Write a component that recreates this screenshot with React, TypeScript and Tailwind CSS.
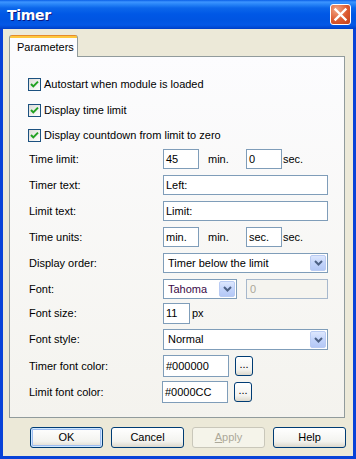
import React from "react";

function Check() {
  return (
    <div className="w-[13px] h-[13px] shrink-0 border border-[#1c5180] bg-[linear-gradient(135deg,#dcdcd7,#ffffff)] flex items-center justify-center">
      <svg width="11" height="11" viewBox="0 0 11 11">
        <path d="M2 5 L4.3 7.4 L9 2.6" stroke="#21a121" strokeWidth="2" fill="none" />
      </svg>
    </div>
  );
}

function ComboArrow({ h }: { h: string }) {
  return (
    <div
      className={
        "w-[16px] " +
        h +
        " shrink-0 rounded-[2px] border border-[#b9cbf3] bg-[linear-gradient(to_bottom,#dde7fd,#c3d4fb_50%,#b4c8f6)] flex items-center justify-center"
      }
    >
      <svg width="9" height="6" viewBox="0 0 9 6">
        <path d="M1 1 L4.5 4.5 L8 1" stroke="#4d6185" strokeWidth="2" fill="none" />
      </svg>
    </div>
  );
}

function XpButton({
  children,
  variant,
}: {
  children: React.ReactNode;
  variant?: "default" | "disabled";
}) {
  if (variant === "disabled") {
    return (
      <div className="w-[73px] h-[21px] rounded-[3px] border border-[#c9c7ba] bg-[#f5f4ea] text-[#aca899] flex items-center justify-center">
        {children}
      </div>
    );
  }
  return (
    <div
      className={
        "w-[73px] h-[21px] rounded-[3px] border border-[#003c74] bg-[linear-gradient(to_bottom,#ffffff,#f3f3ef_70%,#dcd8cc)] flex items-center justify-center " +
        (variant === "default"
          ? "shadow-[inset_0_0_0_1px_#cee7ff,inset_0_0_0_2px_#9ebdf0]"
          : "")
      }
    >
      {children}
    </div>
  );
}

export default function App() {
  return (
    <div className="w-[356px] h-[459px] flex flex-col bg-[#0842d8] font-['Liberation_Sans',Arial,sans-serif] text-[11px] leading-none text-black overflow-hidden select-none">
      {/* Title bar */}
      <div className="h-[29px] shrink-0 flex items-center pl-[7px] pr-[5px] bg-[linear-gradient(to_bottom,#0a5fe6_0px,#3d95ff_2px,#2a87f8_4px,#0b66ea_8px,#0058e6_14px,#0055e2_20px,#0458e6_25px,#0046d0_28px,#003dc4_29px)]">
        <span className="text-white font-bold text-[14px] font-['DejaVu_Sans',sans-serif] tracking-[-0.3px] [text-shadow:1px_1px_0_#0a1883]">
          Timer
        </span>
        <div className="ml-auto w-[21px] h-[21px] rounded-[3px] border border-white bg-[radial-gradient(circle_at_30%_25%,#f2a585,#dc5a30_55%,#c2401a)] flex items-center justify-center">
          <svg width="19" height="19" viewBox="0 0 19 19">
            <path d="M4.5 4.5 L14.5 14.5 M14.5 4.5 L4.5 14.5" stroke="#ffffff" strokeWidth="2.4" strokeLinecap="square" />
          </svg>
        </div>
      </div>

      {/* Client */}
      <div className="flex-1 mx-[3px] mb-[3px] bg-[#ece9d8] flex flex-col pl-[6px] pt-[6px]">
        {/* Tab */}
        <div className="flex">
          <div className="relative z-10 w-[69px] h-[22px] rounded-t-[3px] border-x border-[#919b9c] bg-[linear-gradient(to_bottom,#e68b2c_0px,#e68b2c_1px,#ffc73c_1px,#ffc73c_3px,#fcfcfe_3px)] flex items-center pl-[7px] pt-[3px]">
            Parameters
          </div>
        </div>
        {/* Panel */}
        <div className="-mt-[1px] w-[336px] h-[362px] border border-[#919b9c] bg-[linear-gradient(to_bottom,#fcfcfe,#f4f3ee)] pl-[18px] pt-[21px] flex flex-col">
          <div className="flex items-center h-[13px]">
            <Check />
            <span className="ml-[3px]">Autostart when module is loaded</span>
          </div>
          <div className="flex items-center h-[13px] mt-[13px]">
            <Check />
            <span className="ml-[3px]">Display time limit</span>
          </div>
          <div className="flex items-center h-[13px] mt-[12px]">
            <Check />
            <span className="ml-[3px]">Display countdown from limit to zero</span>
          </div>

          {/* Time limit */}
          <div className="flex items-center h-[20px] mt-[7px]">
            <div className="w-[135px] pl-[1px]">Time limit:</div>
            <div className="w-[36px] h-[20px] border border-[#7f9db9] bg-white flex items-center pl-[2px]">45</div>
            <div className="w-[47px] pl-[9px]">min.</div>
            <div className="w-[36px] h-[20px] border border-[#7f9db9] bg-white flex items-center pl-[2px]">0</div>
            <div className="pl-[1px]">sec.</div>
          </div>

          {/* Timer text */}
          <div className="flex items-center h-[20px] mt-[6px]">
            <div className="w-[135px] pl-[1px]">Timer text:</div>
            <div className="w-[165px] h-[20px] border border-[#7f9db9] bg-white flex items-center pl-[2px]">Left:</div>
          </div>

          {/* Limit text */}
          <div className="flex items-center h-[20px] mt-[6px]">
            <div className="w-[135px] pl-[1px]">Limit text:</div>
            <div className="w-[165px] h-[20px] border border-[#7f9db9] bg-white flex items-center pl-[2px]">Limit:</div>
          </div>

          {/* Time units */}
          <div className="flex items-center h-[20px] mt-[6px]">
            <div className="w-[135px] pl-[1px]">Time units:</div>
            <div className="w-[36px] h-[20px] border border-[#7f9db9] bg-white flex items-center pl-[2px]">min.</div>
            <div className="w-[47px] pl-[9px]">min.</div>
            <div className="w-[36px] h-[20px] border border-[#7f9db9] bg-white flex items-center pl-[2px]">sec.</div>
            <div className="pl-[1px]">sec.</div>
          </div>

          {/* Display order */}
          <div className="flex items-center h-[20px] mt-[6px]">
            <div className="w-[135px] pl-[1px]">Display order:</div>
            <div className="w-[165px] h-[20px] border border-[#7f9db9] bg-white flex items-center pl-[4px] pr-[1px]">
              <span className="flex-1">Timer below the limit</span>
              <ComboArrow h="h-[16px]" />
            </div>
          </div>

          {/* Font */}
          <div className="flex items-center h-[20px] mt-[6px]">
            <div className="w-[135px] pl-[1px]">Font:</div>
            <div className="w-[74px] h-[20px] border border-[#7f9db9] bg-white flex items-center pl-[4px] pr-[1px]">
              <span className="flex-1 text-[#3a0a48]">Tahoma</span>
              <ComboArrow h="h-[16px]" />
            </div>
            <div className="ml-[9px] w-[82px] h-[20px] border border-[#a7b8cc] bg-[#f5f4ef] text-[#aca899] flex items-center pl-[3px]">0</div>
          </div>

          {/* Font size */}
          <div className="flex items-center h-[21px] mt-[4px]">
            <div className="w-[135px] pl-[1px]">Font size:</div>
            <div className="w-[27px] h-[21px] border border-[#7f9db9] bg-white flex items-center pl-[2px]">11</div>
            <div className="pl-[2px]">px</div>
          </div>

          {/* Font style */}
          <div className="flex items-center h-[21px] mt-[5px]">
            <div className="w-[135px] pl-[1px]">Font style:</div>
            <div className="w-[165px] h-[21px] border border-[#7f9db9] bg-white flex items-center pl-[4px] pr-[1px]">
              <span className="flex-1">Normal</span>
              <ComboArrow h="h-[17px]" />
            </div>
          </div>

          {/* Timer font color */}
          <div className="flex items-center h-[22px] mt-[5px]">
            <div className="w-[135px] pl-[1px]">Timer font color:</div>
            <div className="w-[66px] h-[22px] border border-[#7f9db9] bg-white flex items-center pl-[2px]">#000000</div>
            <div className="ml-[6px] w-[18px] h-[20px] rounded-[3px] border border-[#003c74] bg-[linear-gradient(to_bottom,#ffffff,#f3f3ef_70%,#dcd8cc)] flex items-end justify-center pb-[5px]">...</div>
          </div>

          {/* Limit font color */}
          <div className="flex items-center h-[22px] mt-[4px]">
            <div className="w-[134px] pl-[1px]">Limit font color:</div>
            <div className="w-[66px] h-[22px] border border-[#7f9db9] bg-white flex items-center pl-[2px]">#0000CC</div>
            <div className="ml-[6px] w-[18px] h-[20px] rounded-[3px] border border-[#003c74] bg-[linear-gradient(to_bottom,#ffffff,#f3f3ef_70%,#dcd8cc)] flex items-end justify-center pb-[5px]">...</div>
          </div>
        </div>

        {/* Buttons */}
        <div className="flex justify-end gap-[8px] pr-[7px] mt-[9px]">
          <XpButton variant="default">OK</XpButton>
          <XpButton>Cancel</XpButton>
          <XpButton variant="disabled">
            <span>
              <span className="underline">A</span>pply
            </span>
          </XpButton>
          <XpButton>Help</XpButton>
        </div>
      </div>
    </div>
  );
}
